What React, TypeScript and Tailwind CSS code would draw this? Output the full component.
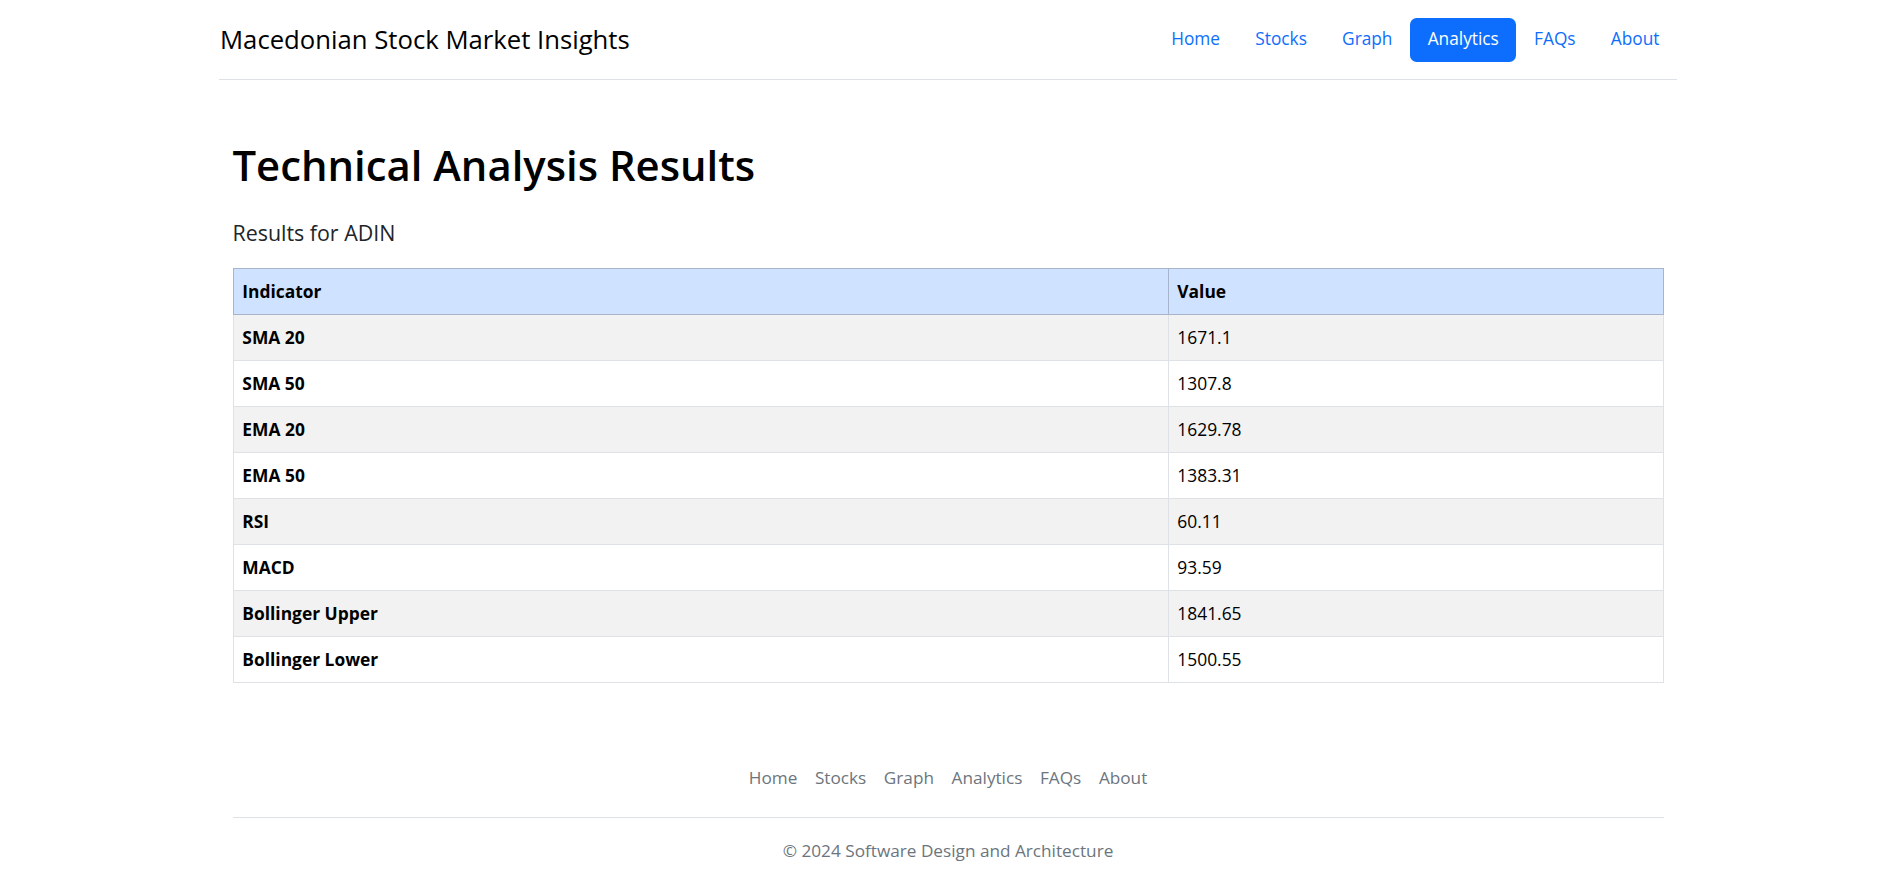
const navLinks = ["Home", "Stocks", "Graph", "Analytics", "FAQs", "About"];

const results = [
  { name: "SMA 20", value: "1671.1" },
  { name: "SMA 50", value: "1307.8" },
  { name: "EMA 20", value: "1629.78" },
  { name: "EMA 50", value: "1383.31" },
  { name: "RSI", value: "60.11" },
  { name: "MACD", value: "93.59" },
  { name: "Bollinger Upper", value: "1841.65" },
  { name: "Bollinger Lower", value: "1500.55" },
];

const Header = () => (
  <header className="w-[1458px] mx-auto flex items-center justify-between py-[17.5px] border-b border-[#dee2e6]">
    <a className="pl-[1px] text-[25.7px] leading-[36px] text-black">
      Macedonian Stock Market Insights
    </a>
    <ul className="flex items-center">
      {navLinks.map((link) => (
        <li key={link}>
          <a
            className={
              link === "Analytics"
                ? "block px-[17.6px] py-[8.8px] text-[17.3px] leading-[26.4px] rounded-[6.6px] bg-[#0d6efd] text-white"
                : "block px-[17.6px] py-[8.8px] text-[17.3px] leading-[26.4px] rounded-[6.6px] text-[#0d6efd]"
            }
          >
            {link}
          </a>
        </li>
      ))}
    </ul>
  </header>
);

const ResultsTable = () => (
  <table className="w-full border-collapse text-[17.4px] text-black">
    <thead>
      <tr className="bg-[#cfe2ff]">
        <th className="w-[935px] h-[46px] px-[8.8px] text-left font-bold border border-[#a6b5cc]">
          Indicator
        </th>
        <th className="h-[46px] px-[8.8px] text-left font-bold border border-[#a6b5cc]">
          Value
        </th>
      </tr>
    </thead>
    <tbody>
      {results.map((row, i) => (
        <tr key={row.name} className={i % 2 === 0 ? "bg-[#f2f2f2]" : "bg-white"}>
          <td className="h-[46px] px-[8.8px] font-bold border border-[#dee2e6]">
            {row.name}
          </td>
          <td className="h-[46px] px-[8.8px] border border-[#dee2e6]">{row.value}</td>
        </tr>
      ))}
    </tbody>
  </table>
);

const Footer = () => (
  <footer className="mt-[73px] pb-[20px]">
    <ul className="flex justify-center border-b border-[#dee2e6] pb-[17.6px] mb-[20px]">
      {navLinks.map((link) => (
        <li key={link}>
          <a className="block px-[8.8px] py-[8.8px] text-[17.2px] leading-[26.4px] text-[#6c757d]">
            {link}
          </a>
        </li>
      ))}
    </ul>
    <p className="text-center text-[17.2px] leading-[26.4px] text-[#6c757d]">
      © 2024 Software Design and Architecture
    </p>
  </footer>
);

export default function App() {
  return (
    <div className="min-h-screen bg-white text-[#212529] font-['Open_Sans',sans-serif]">
      <Header />
      <main className="w-[1431px] mx-auto pt-[59px]">
        <h1 className="text-[41.8px] leading-[52.8px] font-semibold text-black">
          Technical Analysis Results
        </h1>
        <p className="mt-[24px] text-[21.4px] leading-[33px]">Results for ADIN</p>
        <div className="mt-[19px]">
          <ResultsTable />
        </div>
      </main>
      <div className="w-[1431px] mx-auto">
        <Footer />
      </div>
    </div>
  );
}
